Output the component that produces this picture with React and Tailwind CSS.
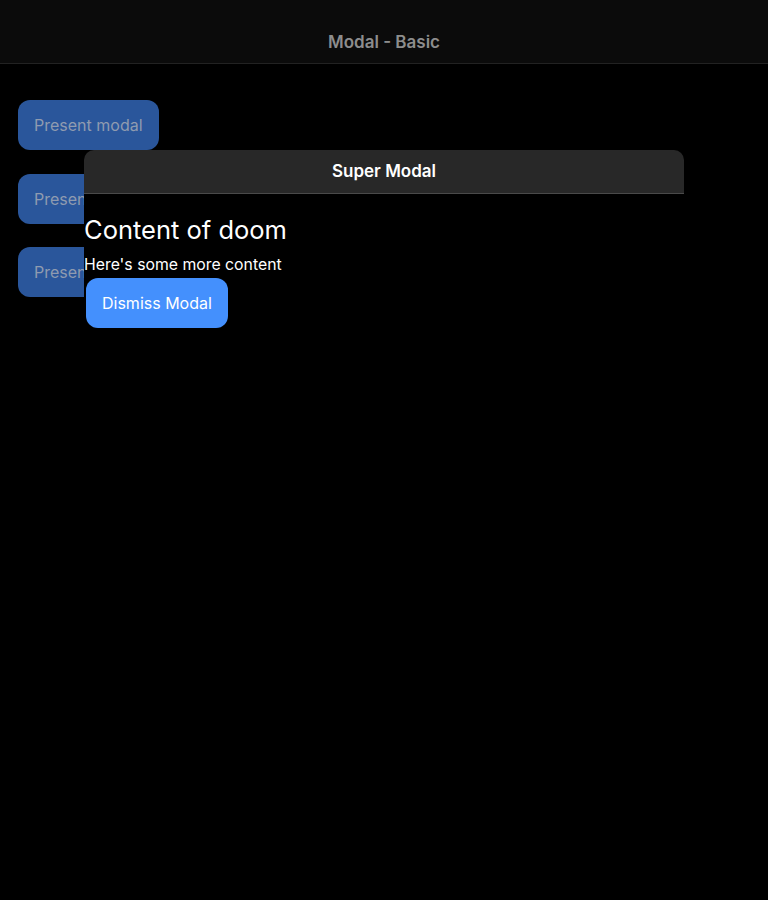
const font = { fontFamily: "Inter, 'Noto Sans', sans-serif" };

export default function App() {
  return (
    <div className="relative min-h-[900px] bg-black" style={font}>
      {/* Toolbar */}
      <header className="flex h-[64px] items-end justify-center border-b border-[#222222] bg-[#0b0b0b] pb-[8px]">
        <h1 className="text-[17px] font-semibold text-[#8d8d8d]">Modal - Basic</h1>
      </header>

      {/* Page buttons */}
      <div className="flex flex-col items-start gap-[24px] px-[18px] pt-[36px]">
        <button className="h-[50px] rounded-[12px] bg-[#2a569b] px-[16px] text-[16px] text-[#8f9bb0]">Present modal</button>
        <button className="h-[50px] rounded-[12px] bg-[#2a569b] px-[16px] text-[16px] text-[#8f9bb0]">Present modal</button>
        <button className="-mt-[1px] h-[50px] rounded-[12px] bg-[#2a569b] px-[16px] text-[16px] text-[#8f9bb0]">Present modal</button>
      </div>

      {/* Modal */}
      <div className="absolute left-[84px] top-[150px] w-[600px] bg-black">
        <div className="flex h-[44px] items-center justify-center rounded-t-[10px] border-b border-[#4a4a4a] bg-[#282828]">
          <h2 className="text-[17px] font-semibold text-white">Super Modal</h2>
        </div>
        <div className="flex flex-col items-start pt-[19px]">
          <h3 className="text-[25.5px] leading-[34px] text-white">Content of doom</h3>
          <p className="mt-[8px] text-[15.8px] leading-[20px] text-white">Here's some more content</p>
          <button className="ml-[2px] mt-[3px] h-[50px] rounded-[12px] bg-[#4490fd] px-[16px] text-[16px] text-white">
            Dismiss Modal
          </button>
        </div>
      </div>
    </div>
  );
}
